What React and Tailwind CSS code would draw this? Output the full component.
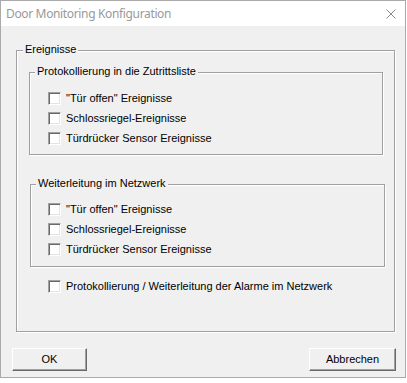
import React from "react";

const font = { fontFamily: '"Liberation Sans", Arial, sans-serif' };

function Box() {
  return (
    <div className="w-[13px] h-[13px] shrink-0 bg-white border-t border-l border-t-[#a0a0a0] border-l-[#a0a0a0] border-b border-r border-b-white border-r-white shadow-[inset_1px_1px_0_#696969,inset_-1px_-1px_0_#e3e3e3]" />
  );
}

function Check({ label }) {
  return (
    <div className="h-[20px] flex items-start">
      <Box />
      <span className="ml-[5px] leading-[13px] whitespace-nowrap">{label}</span>
    </div>
  );
}

function Legend({ children, ml }) {
  return (
    <div className={`-mt-[8px] ${ml} px-[2px] h-[13px] leading-[13px] w-fit bg-[#f0f0f0] whitespace-nowrap`}>
      {children}
    </div>
  );
}

function Btn({ children, w }) {
  return (
    <div
      className={`${w} h-[23px] flex items-center justify-center bg-[#f0f0f0] border-t border-l border-t-white border-l-white border-b border-r border-b-[#696969] border-r-[#696969] shadow-[inset_-1px_-1px_0_#a0a0a0]`}
    >
      {children}
    </div>
  );
}

export default function App() {
  return (
    <div className="w-[407px] h-[383px] bg-white overflow-hidden">
      <div className="w-[406px] h-[378px] border border-[#aaaaaa] flex flex-col">
        <div className="h-[25px] shrink-0 bg-white flex items-center justify-between pl-[5px] pr-[9px]">
          <span
            className="text-[12px] tracking-[-0.35px] text-[#999999] whitespace-nowrap"
            style={{ fontFamily: '"Noto Sans", "Open Sans", sans-serif' }}
          >
            Door Monitoring Konfiguration
          </span>
          <svg width="10" height="10" viewBox="0 0 10 10" className="mt-[1px]">
            <path d="M0.5 0.5 L9.5 9.5 M9.5 0.5 L0.5 9.5" stroke="#8a8a8a" strokeWidth="1" fill="none" />
          </svg>
        </div>
        <div className="flex-1 bg-[#f0f0f0] flex flex-col text-[11px] text-black" style={font}>
          <div className="mt-[24px] ml-[15px] w-[379px] h-[282px] border border-[#a0a0a0] shadow-[1px_1px_0_#ffffff,inset_1px_1px_0_#ffffff] flex flex-col">
            <Legend ml="ml-[6px]">Ereignisse</Legend>
            <div className="mt-[16px] ml-[12px] w-[354px] h-[83px] border border-[#a0a0a0] shadow-[1px_1px_0_#ffffff,inset_1px_1px_0_#ffffff] flex flex-col">
              <Legend ml="ml-[5px]">Protokollierung in die Zutrittsliste</Legend>
              <div className="mt-[14px] ml-[18px] flex flex-col">
                <Check label={'"Tür offen" Ereignisse'} />
                <Check label="Schlossriegel-Ereignisse" />
                <Check label="Türdrücker Sensor Ereignisse" />
              </div>
            </div>
            <div className="mt-[29px] ml-[13px] w-[355px] h-[83px] border border-[#a0a0a0] shadow-[1px_1px_0_#ffffff,inset_1px_1px_0_#ffffff] flex flex-col">
              <Legend ml="ml-[5px]">Weiterleitung im Netzwerk</Legend>
              <div className="mt-[13px] ml-[17px] flex flex-col">
                <Check label={'"Tür offen" Ereignisse'} />
                <Check label="Schlossriegel-Ereignisse" />
                <Check label="Türdrücker Sensor Ereignisse" />
              </div>
            </div>
            <div className="mt-[13px] ml-[31px]">
              <Check label="Protokollierung / Weiterleitung der Alarme im Netzwerk" />
            </div>
          </div>
          <div className="mt-[16px] ml-[11px] mr-[9px] flex justify-between">
            <Btn w="w-[75px]">OK</Btn>
            <Btn w="w-[87px]">Abbrechen</Btn>
          </div>
        </div>
      </div>
    </div>
  );
}
